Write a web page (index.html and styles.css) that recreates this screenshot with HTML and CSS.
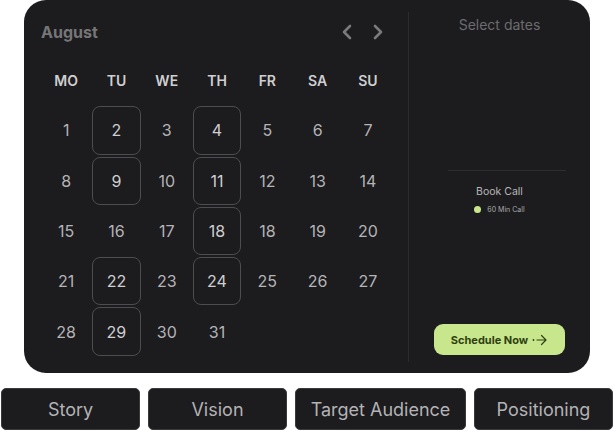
FILE: index.html
```html
<!DOCTYPE html>
<html>
<head>
<meta charset="utf-8">
<link rel="stylesheet" href="styles.css">
</head>
<body>
<div class="page">
  <div class="card">
    <div class="cal">
      <div class="cal-head">
        <span class="month">August</span>
        <div class="arrows">
          <svg width="12" height="16" viewBox="0 0 12 16"><path d="M9 2 L3 8 L9 14" fill="none" stroke="#7a7a7c" stroke-width="2.6" stroke-linecap="round" stroke-linejoin="round"/></svg>
          <svg width="12" height="16" viewBox="0 0 12 16"><path d="M3 2 L9 8 L3 14" fill="none" stroke="#7a7a7c" stroke-width="2.6" stroke-linecap="round" stroke-linejoin="round"/></svg>
        </div>
      </div>
      <div class="grid">
        <div class="dow">MO</div><div class="dow">TU</div><div class="dow">WE</div><div class="dow">TH</div><div class="dow">FR</div><div class="dow">SA</div><div class="dow">SU</div>
        <div class="d">1</div><div class="d sel">2</div><div class="d">3</div><div class="d sel">4</div><div class="d">5</div><div class="d">6</div><div class="d">7</div>
        <div class="d">8</div><div class="d sel">9</div><div class="d">10</div><div class="d sel">11</div><div class="d">12</div><div class="d">13</div><div class="d">14</div>
        <div class="d">15</div><div class="d">16</div><div class="d">17</div><div class="d sel">18</div><div class="d">18</div><div class="d">19</div><div class="d">20</div>
        <div class="d">21</div><div class="d sel">22</div><div class="d">23</div><div class="d sel">24</div><div class="d">25</div><div class="d">26</div><div class="d">27</div>
        <div class="d">28</div><div class="d sel">29</div><div class="d">30</div><div class="d">31</div>
      </div>
    </div>
    <div class="divider"></div>
    <div class="side">
      <div class="select">Select dates</div>
      <div class="hr"></div>
      <div class="book">Book Call</div>
      <div class="slot"><span class="dot"></span>60 Min Call</div>
      <div class="btn">Schedule Now
        <svg width="16" height="12" viewBox="0 0 16 12"><circle cx="1.5" cy="6" r="0.9" fill="#2f3f12"/><path d="M5 6 H14 M9.5 1.5 L14 6 L9.5 10.5" fill="none" stroke="#2f3f12" stroke-width="1.2" stroke-linecap="round" stroke-linejoin="round"/></svg>
      </div>
    </div>
  </div>
  <div class="tabs">
    <div class="tab t1">Story</div>
    <div class="tab t1">Vision</div>
    <div class="tab t2">Target Audience</div>
    <div class="tab t1">Positioning</div>
  </div>
</div>
</body>
</html>
```
FILE: styles.css
```css
* { box-sizing: border-box; }
html, body { margin: 0; padding: 0; background: #ffffff; }
body { font-family: Inter, "Liberation Sans", sans-serif; width: 615px; height: 431px; overflow: hidden; }
.page { display: flex; flex-direction: column; width: 615px; }
.card {
  margin-left: 24px;
  width: 566px;
  height: 373px;
  background: #1c1b1e;
  border-radius: 22px;
  display: flex;
}
.cal { width: 384px; padding-left: 17px; padding-top: 20px; }
.cal-head { display: flex; align-items: center; justify-content: space-between; height: 23px; padding-right: 24px; }
.month { font-size: 16px; font-weight: 700; color: #767679; }
.arrows { display: flex; gap: 19px; align-items: center; }
.arrows svg { display: block; }
.grid {
  margin-top: 12px;
  display: grid;
  grid-template-columns: repeat(7, 50.3px);
  grid-auto-rows: 50.3px;
}
.dow { display: flex; align-items: center; justify-content: center; font-size: 14px; font-weight: 600; color: #cfcfd1; }
.d { display: flex; align-items: center; justify-content: center; font-size: 16px; font-weight: 400; color: #b4b4b6; margin: 1px; border-radius: 8px; border: 1.5px solid transparent; }
.d.sel { border-color: #4d4c50; color: #cfcfd1; }
.divider { width: 1px; background: #2b2a2e; margin: 12px 0 11px; }
.side { flex: 1; display: flex; flex-direction: column; align-items: center; padding-top: 16px; }
.select { font-size: 14px; color: #6c6c6f; }
.hr { height: 1px; width: 118px; background: #2e2d31; margin-top: 137px; margin-left: 14px; }
.book { font-size: 10.5px; color: #b7b7b9; margin-top: 14px; }
.slot { display: flex; align-items: center; font-size: 7px; color: #a9a9ab; margin-top: 7px; gap: 6px; }
.dot { width: 7px; height: 7px; border-radius: 50%; background: #c9e68c; }
.btn {
  margin-top: 110px;
  width: 131px; height: 31px;
  background: #c8e68b;
  border-radius: 9px;
  display: flex; align-items: center; justify-content: center; gap: 4px;
  font-size: 11px; font-weight: 700; color: #2f3f12;
}
.btn svg { display: block; }
.tabs { display: flex; gap: 8px; margin-top: 15px; padding-left: 1px; }
.tab {
  flex-shrink: 0;
  height: 42px;
  background: #1c1b1e;
  border: 1px solid #3a393d;
  border-radius: 5px;
  display: flex; align-items: center; justify-content: center;
  font-size: 18px; color: #b3b3b5;
}
.t1 { width: 139px; }
.t2 { width: 171px; }
```
